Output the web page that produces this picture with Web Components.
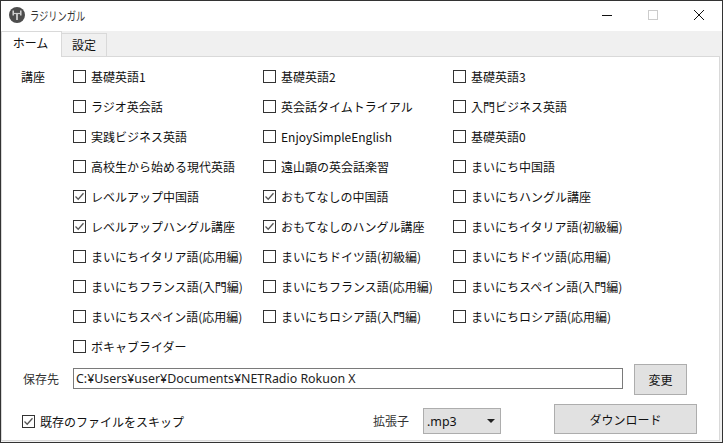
<!DOCTYPE html>
<html>
<head>
<meta charset="utf-8">
<style>
html,body{margin:0;padding:0;background:#fff;}
body{font-family:"Noto Sans CJK JP","Liberation Sans",sans-serif;font-size:12px;color:#111;}
</style>
</head>
<body>
<app-window></app-window>
<script>
const checkTpl = document.createElement("template");
checkTpl.innerHTML = `
<style>
:host{display:flex;align-items:center;height:13px;line-height:13px;white-space:nowrap;}
.box{width:11px;height:11px;border:1px solid #333;background:#fff;margin-right:5px;flex:none;}
svg{display:block;}
</style>
<div class="box"></div><slot></slot>`;
class RadioCheck extends HTMLElement{
  constructor(){
    super();
    this.attachShadow({mode:"open"}).append(checkTpl.content.cloneNode(true));
  }
  connectedCallback(){
    if(this.hasAttribute("checked")){
      this.shadowRoot.querySelector(".box").innerHTML = '<svg width="11" height="11" viewBox="0 0 11 11"><path d="M1.5 5.5 L4.2 8.2 L9.5 2.2" fill="none" stroke="#555" stroke-width="1.3"/></svg>';
    }
  }
}
customElements.define("radio-check", RadioCheck);

const titleTpl = document.createElement("template");
titleTpl.innerHTML = `
<style>
:host{display:flex;align-items:center;box-sizing:border-box;height:30px;padding-bottom:2px;background:#fff;flex:none;}
.icon{margin-left:8px;margin-right:5px;flex:none;display:block;}
.title{flex:1;color:#333;}
.title span{display:inline-block;transform:scaleX(.77);transform-origin:left center;}
.btn{width:46px;height:28px;display:flex;align-items:center;justify-content:center;}
.btn svg{display:block;}
</style>
<svg class="icon" width="16" height="16" viewBox="0 0 16 16">
  <circle cx="8" cy="8" r="8" fill="#4d4d4d"/>
  <path d="M8 6V13" stroke="#ddd" stroke-width="1.6"/>
  <path d="M4.2 3.5V8.5M11.8 3.5V8.5" stroke="#ddd" stroke-width="1.4"/>
  <path d="M5 6.5H11" fill="none" stroke="#ccc" stroke-width="1.2"/>
</svg>
<div class="title"><span><slot></slot></span></div>
<div class="btn"><svg width="10" height="10" viewBox="0 0 10 10"><path d="M0 5.5H10" stroke="#111" stroke-width="1"/></svg></div>
<div class="btn"><svg width="10" height="10" viewBox="0 0 10 10"><rect x=".5" y=".5" width="9" height="9" fill="none" stroke="#ccc"/></svg></div>
<div class="btn"><svg width="10" height="10" viewBox="0 0 10 10"><path d="M0 0L10 10M10 0L0 10" stroke="#111" stroke-width="1"/></svg></div>`;
class TitleBar extends HTMLElement{
  constructor(){
    super();
    this.attachShadow({mode:"open"}).append(titleTpl.content.cloneNode(true));
  }
}
customElements.define("title-bar", TitleBar);

const tabsTpl = document.createElement("template");
tabsTpl.innerHTML = `
<style>
:host{display:flex;align-items:flex-end;height:25px;background:#f0f0f0;flex:none;}
.tab{display:flex;align-items:center;justify-content:center;box-sizing:border-box;}
.on{width:61px;height:26px;background:#fff;border:1px solid #d9d9d9;border-bottom:0;margin-bottom:-1px;padding:0 2px 4px 0;position:relative;z-index:1;}
.off{width:45px;height:23px;background:#f0f0f0;border:1px solid #d9d9d9;border-left:0;border-bottom:0;padding-bottom:2px;}
</style>
<div class="tab on">ホーム</div>
<div class="tab off">設定</div>`;
class TabStrip extends HTMLElement{
  constructor(){
    super();
    this.attachShadow({mode:"open"}).append(tabsTpl.content.cloneNode(true));
  }
}
customElements.define("tab-strip", TabStrip);

const courses = [
  ["基礎英語1"],["基礎英語2"],["基礎英語3"],
  ["ラジオ英会話"],["英会話タイムトライアル"],["入門ビジネス英語"],
  ["実践ビジネス英語"],["EnjoySimpleEnglish"],["基礎英語0"],
  ["高校生から始める現代英語"],["遠山顕の英会話楽習"],["まいにち中国語"],
  ["レベルアップ中国語",1],["おもてなしの中国語",1],["まいにちハングル講座"],
  ["レベルアップハングル講座",1],["おもてなしのハングル講座",1],["まいにちイタリア語(初級編)"],
  ["まいにちイタリア語(応用編)"],["まいにちドイツ語(初級編)"],["まいにちドイツ語(応用編)"],
  ["まいにちフランス語(入門編)"],["まいにちフランス語(応用編)"],["まいにちスペイン語(入門編)"],
  ["まいにちスペイン語(応用編)"],["まいにちロシア語(入門編)"],["まいにちロシア語(応用編)"],
  ["ボキャブライダー"]
];

const gridTpl = document.createElement("template");
gridTpl.innerHTML = `
<style>
:host{display:grid;grid-template-columns:190px 190px 190px;grid-auto-rows:13px;row-gap:17px;}
</style>`;
class CourseGrid extends HTMLElement{
  constructor(){
    super();
    const s = this.attachShadow({mode:"open"});
    s.append(gridTpl.content.cloneNode(true));
    courses.forEach(c=>{
      const el = document.createElement("radio-check");
      if(c[1]) el.setAttribute("checked","");
      el.textContent = c[0];
      s.append(el);
    });
  }
}
customElements.define("course-grid", CourseGrid);

const winTpl = document.createElement("template");
winTpl.innerHTML = `
<style>
:host{display:flex;flex-direction:column;box-sizing:border-box;width:723px;height:443px;border:1px solid #333;background:#f0f0f0;overflow:hidden;}
.panel{flex:1;background:#fff;margin:0 2px 1px 0;border:1px solid #d9d9d9;display:flex;flex-direction:column;padding:13px 0 0 20px;}
.top{display:flex;}
.lbl{width:51px;flex:none;height:13px;line-height:13px;margin-left:-1px;padding-right:1px;}
.path{display:flex;align-items:flex-start;margin-top:11px;}
.path .name{width:50px;margin-left:1px;margin-top:6px;height:17px;line-height:17px;color:#333;flex:none;}
.field{box-sizing:border-box;width:550px;height:21px;margin-top:4px;border:1px solid #7a7a7a;padding:1px 2px 0;line-height:18px;font-family:"Noto Sans",sans-serif;font-size:12.4px;color:#222;white-space:nowrap;}
.gbtn{box-sizing:border-box;background:#e1e1e1;border:1px solid #adadad;display:flex;align-items:center;justify-content:center;}
.change{width:53px;height:31px;margin-left:11px;}
.bottom{display:flex;align-items:flex-start;margin-top:9px;}
.bottom radio-check{width:351px;flex:none;margin-top:11px;}
.ext{width:50px;flex:none;color:#333;margin-top:8px;line-height:17px;height:17px;}
.sel{box-sizing:border-box;width:78px;height:26px;margin-top:4px;background:#e1e1e1;border:1px solid #adadad;display:flex;align-items:center;padding:0 5px 0 3px;justify-content:space-between;font-family:"Noto Sans",sans-serif;font-size:12.4px;}
.sel i{width:0;height:0;border:4px solid transparent;border-top:4px solid #222;border-bottom:0;}
.dl{width:143px;height:30px;margin-left:53px;}
</style>
<title-bar>ラジリンガル</title-bar>
<tab-strip></tab-strip>
<div class="panel">
  <div class="top"><div class="lbl">講座</div><course-grid></course-grid></div>
  <div class="path"><div class="name">保存先</div><div class="field">C:¥Users¥user¥Documents¥NETRadio Rokuon X</div><div class="gbtn change">変更</div></div>
  <div class="bottom"><radio-check checked>既存のファイルをスキップ</radio-check><div class="ext">拡張子</div><div class="sel">.mp3<i></i></div><div class="gbtn dl">ダウンロード</div></div>
</div>`;
class AppWindow extends HTMLElement{
  constructor(){
    super();
    this.attachShadow({mode:"open"}).append(winTpl.content.cloneNode(true));
  }
}
customElements.define("app-window", AppWindow);
</script>
</body>
</html>
